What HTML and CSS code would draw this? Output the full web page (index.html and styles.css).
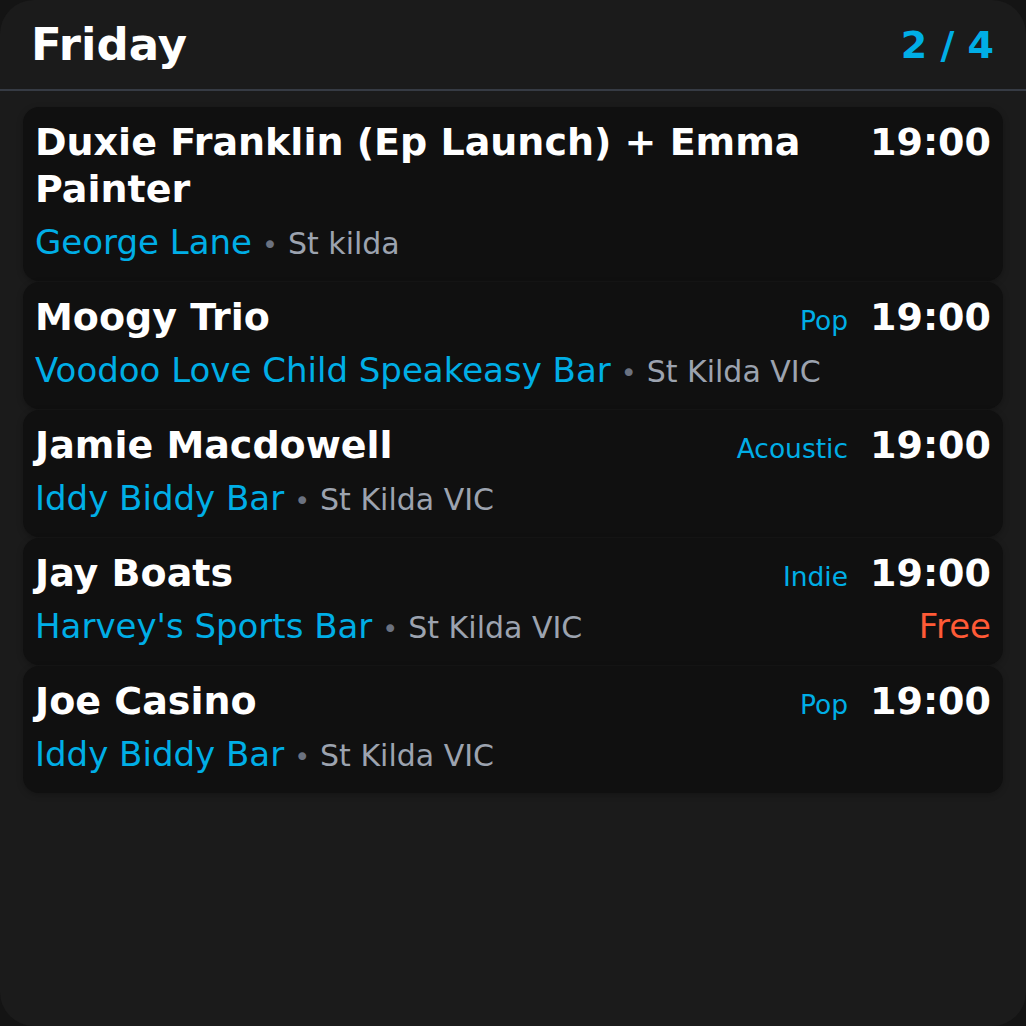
FILE: index.html
```html
<!DOCTYPE html>
<html>
<head>
<meta charset="utf-8">
<link rel="stylesheet" href="styles.css">
</head>
<body>
<div class="screen">
  <header class="header">
    <h1 class="day">Friday</h1>
    <div class="pager">2 / 4</div>
  </header>
  <div class="list">
    <div class="card">
      <div class="row">
        <div class="title">Duxie Franklin (Ep Launch) + Emma Painter</div>
        <div class="meta"><span class="time">19:00</span></div>
      </div>
      <div class="row sub">
        <div class="place"><span class="venue">George Lane</span><span class="dot">•</span><span class="loc">St kilda</span></div>
      </div>
    </div>
    <div class="card">
      <div class="row">
        <div class="title">Moogy Trio</div>
        <div class="meta"><span class="genre">Pop</span><span class="time">19:00</span></div>
      </div>
      <div class="row sub">
        <div class="place"><span class="venue">Voodoo Love Child Speakeasy Bar</span><span class="dot">•</span><span class="loc">St Kilda VIC</span></div>
      </div>
    </div>
    <div class="card">
      <div class="row">
        <div class="title">Jamie Macdowell</div>
        <div class="meta"><span class="genre">Acoustic</span><span class="time">19:00</span></div>
      </div>
      <div class="row sub">
        <div class="place"><span class="venue">Iddy Biddy Bar</span><span class="dot">•</span><span class="loc">St Kilda VIC</span></div>
      </div>
    </div>
    <div class="card">
      <div class="row">
        <div class="title">Jay Boats</div>
        <div class="meta"><span class="genre">Indie</span><span class="time">19:00</span></div>
      </div>
      <div class="row sub">
        <div class="place"><span class="venue">Harvey's Sports Bar</span><span class="dot">•</span><span class="loc">St Kilda VIC</span></div>
        <div class="price">Free</div>
      </div>
    </div>
    <div class="card">
      <div class="row">
        <div class="title">Joe Casino</div>
        <div class="meta"><span class="genre">Pop</span><span class="time">19:00</span></div>
      </div>
      <div class="row sub">
        <div class="place"><span class="venue">Iddy Biddy Bar</span><span class="dot">•</span><span class="loc">St Kilda VIC</span></div>
      </div>
    </div>
  </div>
</div>
</body>
</html>
```
FILE: styles.css
```css
html, body {
  margin: 0;
  padding: 0;
  background: #141414;
}
body {
  font-family: "DejaVu Sans", sans-serif;
  color: #ffffff;
}
.screen {
  width: 1026px;
  height: 1026px;
  background: #1b1b1b;
  border-radius: 34px;
  overflow: hidden;
  box-sizing: border-box;
}
.header {
  height: 89px;
  border-bottom: 2px solid #363b44;
  display: flex;
  align-items: center;
  justify-content: space-between;
  padding: 0 32px 0 31px;
  box-sizing: content-box;
}
.day {
  margin: 0;
  font-size: 45px;
  font-weight: bold;
  line-height: 1.2;
}
.pager {
  font-size: 38px;
  font-weight: bold;
  color: #00aee6;
}
.list {
  padding: 16px 23px 0 23px;
  display: flex;
  flex-direction: column;
  gap: 1px;
}
.card {
  background: #101010;
  border-radius: 16px;
  padding: 12px 12px 15px 12px;
  display: flex;
  flex-direction: column;
  gap: 8px;
  box-shadow: 0 2px 6px rgba(0,0,0,0.25);
}
.row {
  display: flex;
  justify-content: space-between;
  align-items: baseline;
  gap: 24px;
}
.title {
  font-size: 38px;
  font-weight: bold;
  line-height: 47px;
  flex: 1;
  min-width: 0;
}
.meta {
  display: flex;
  align-items: baseline;
  gap: 22px;
  white-space: nowrap;
  line-height: 1;
}
.genre {
  font-size: 26.5px;
  color: #00aee6;
}
.time {
  font-size: 38px;
  font-weight: bold;
}
.place {
  font-size: 34px;
  line-height: 42px;
}
.venue {
  color: #00aee6;
}
.dot {
  color: #6b7280;
  font-size: 27px;
  margin: 0 10px;
}
.loc {
  color: #9ca3af;
  font-size: 30px;
}
.price {
  font-size: 34px;
  line-height: 42px;
  color: #ff5a36;
}
```
